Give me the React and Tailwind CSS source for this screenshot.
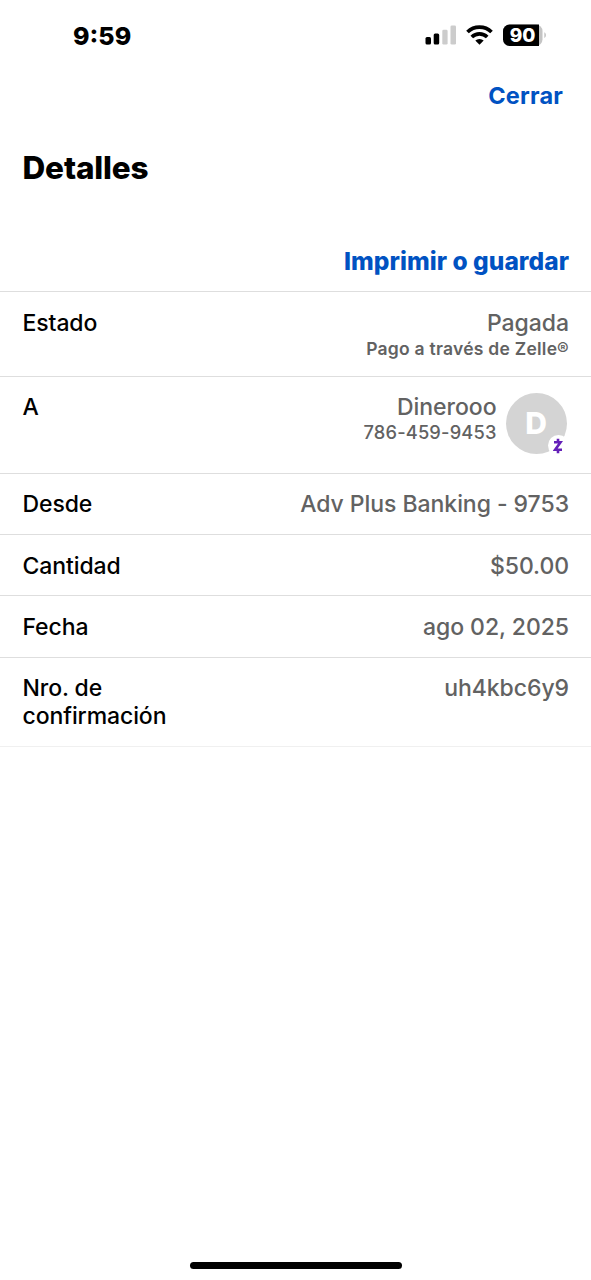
function Row({ label, h, aside, pad = "pt-[17px]", line = "border-[#dedede]", children }) {
  return (
    <div className={`flex justify-between border-b pl-[22.5px] pr-[22px] ${pad} ${line} ${h}`}>
      <div className="w-[180px] text-[23px] font-medium leading-[28px] tracking-[-0.1px] text-black">{label}</div>
      <div className="flex">
        <div className="text-right text-[23px] font-medium leading-[28px] tracking-[-0.05px] text-[#626262]">{children}</div>
        {aside}
      </div>
    </div>
  );
}

function StatusIcons() {
  return (
    <svg className="mt-[4px] shrink-0" width="122" height="24" viewBox="425 24 122 24">
      <rect x="425.500" y="37" width="5.500" height="7.500" rx="1.500" />
      <rect x="433.700" y="33.500" width="5.500" height="11" rx="1.500" />
      <rect x="442.300" y="29.700" width="5.300" height="14.800" rx="1.300" fill="#cccccc" />
      <rect x="450.500" y="25.500" width="5.500" height="19" rx="1.300" fill="#cccccc" />
      <g fill="none" stroke="#000" strokeWidth="3.700">
        <path d="M467.500 32a17 17 0 0 1 24 0" />
        <path d="M471.800 37a11 11 0 0 1 15.400 0" />
      </g>
      <path d="M479.500 44.800l-4.200-4.200a6.200 6.200 0 0 1 8.400 0z" />
      <rect x="503" y="24.500" width="39.500" height="21.500" rx="6.500" fill="#c4c4c4" />
      <path d="M509.500 24.500H539V46h-29.500a6.500 6.500 0 0 1-6.500-6.500V31a6.500 6.500 0 0 1 6.500-6.500z" />
      <path d="M544.300 32.200c2.200 1 2.200 4.800 0 5.800z" fill="#c4c4c4" />
      <text x="522.500" y="42.200" textAnchor="middle" fill="#fff" fontSize="19" fontWeight="800" fontFamily="Inter, sans-serif">90</text>
    </svg>
  );
}

function Avatar() {
  return (
    <div className="relative ml-[9px] mr-[2.5px] flex size-[61px] items-center justify-center rounded-full bg-[#d4d4d4] text-[30px] font-extrabold text-white">
      D
      <div className="absolute -right-[2px] -bottom-[2px] flex size-[21px] items-center justify-center rounded-full bg-white">
        <svg width="10" height="16" viewBox="0 0 10 16" fill="none" stroke="#6420b8" strokeWidth="2.600">
          <path d="M1 4.300h6.500L2.200 11.700h6.800M5 .8v3.500M5 11.700v3.500" />
        </svg>
      </div>
    </div>
  );
}

export default function App() {
  return (
    <div className="flex h-[1280px] w-[591px] flex-col bg-white font-['Inter',sans-serif] text-black">
      <header className="flex h-[72px] items-start justify-between pl-[73px] pr-[44px] pt-[20px]">
        <div className="mt-px text-[25px] font-extrabold leading-[30px]">9:59</div>
        <StatusIcons />
      </header>
      <div className="flex h-[48px] items-center justify-end pr-[28px] text-[23.5px] font-bold tracking-[0.2px] text-[#0052c2]">Cerrar</div>
      <h1 className="mt-[25.5px] pl-[22.5px] text-[31.5px] font-extrabold leading-[44px] tracking-[-0.15px]">Detalles</h1>
      <div className="flex h-[102.5px] items-end justify-end border-b border-[#dedede] pb-[14px] pr-[22px] text-[24.5px] font-extrabold leading-[32px] tracking-[0.05px] text-[#0052c2]">Imprimir o guardar</div>
      <Row label="Estado" h="h-[85px]">
        Pagada
        <div className="text-[17.5px] font-semibold leading-[24px] tracking-[0.25px]">Pago a través de Zelle®</div>
      </Row>
      <Row label="A" h="h-[97px]" pad="pt-[16px]" aside={<Avatar />}>
        Dinerooo
        <div className="-mt-px text-[18.3px] leading-[24px] tracking-[0.15px]">786-459-9453</div>
      </Row>
      <Row label="Desde" h="h-[61px]" pad="pt-[16px]">Adv Plus Banking - 9753</Row>
      <Row label="Cantidad" h="h-[61px]">$50.00</Row>
      <Row label="Fecha" h="h-[62px]">ago 02, 2025</Row>
      <Row label="Nro. de confirmación" h="h-[89px]" pad="pt-[16px]" line="border-[#f0f0f0]">uh4kbc6y9</Row>
      <div className="mx-auto mt-auto mb-[11px] h-[7px] w-[212px] rounded-full bg-black" />
    </div>
  );
}
